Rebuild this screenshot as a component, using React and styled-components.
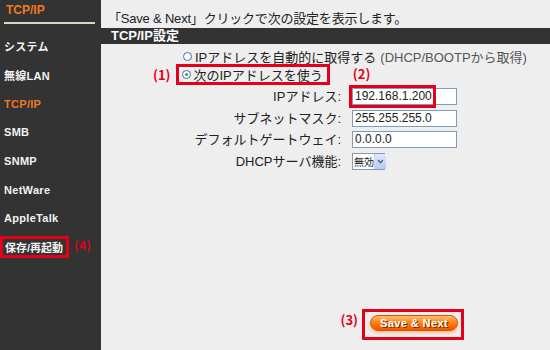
import { Fragment } from "react";
import styled, { createGlobalStyle } from "styled-components";

const GlobalStyle = createGlobalStyle`
  html, body {
    margin: 0;
    padding: 0;
    background: #eeeeee;
  }
  body {
    font-family: "Liberation Sans", "Noto Sans CJK JP", sans-serif;
  }
`;

const RED = "#e3001b";

const Page = styled.div`
  width: 550px;
  height: 350px;
  display: flex;
  overflow: hidden;
`;

const Sidebar = styled.div`
  width: 101px;
  flex-shrink: 0;
  background: #333333;
  display: flex;
  flex-direction: column;
`;

const SideHeader = styled.div`
  height: 22px;
  line-height: 20px;
  padding-left: 6px;
  color: #f07a22;
  font-size: 12px;
  font-weight: bold;
`;

const Divider = styled.div`
  height: 2px;
  margin: 0 6px 0 4px;
  background: #ddd8c4;
`;

const MenuList = styled.ul`
  list-style: none;
  margin: 0;
  padding: 8px 0 0 4px;
`;

const MenuItem = styled.li`
  height: 28.7px;
  display: flex;
  align-items: center;
  white-space: nowrap;
  color: ${(p) => (p.$active ? "#f07a22" : "#f2f2f2")};
  font-size: 11px;
  font-weight: bold;
  letter-spacing: 0.3px;
`;

const MarkBox = styled.span`
  display: inline-flex;
  align-items: center;
  border: 3px solid ${RED};
  box-sizing: border-box;
  white-space: nowrap;
`;

const SideMark = styled(MarkBox)`
  height: 22px;
  margin-left: -4px;
  padding: 0 3px 0 2px;
  letter-spacing: 0;
`;

const Note = styled.span`
  color: ${RED};
  font-size: 13px;
  font-weight: bold;
  font-family: "Noto Sans CJK JP", sans-serif;
  line-height: 16px;
`;

const SideNote = styled(Note)`
  margin-left: 5px;
  margin-top: -4px;
  font-size: 12px;
`;

const Main = styled.div`
  flex: 1;
  display: flex;
  flex-direction: column;
  color: #222;
  font-size: 13px;
`;

const Instruction = styled.div`
  height: 28px;
  box-sizing: border-box;
  padding: 11px 0 0 7px;
  line-height: 16px;
  white-space: nowrap;
  letter-spacing: -0.2px;
`;

const SectionBar = styled.div`
  height: 16px;
  line-height: 16px;
  padding-left: 10px;
  background: #333333;
  color: #fff;
  font-weight: bold;
  font-size: 13px;
`;

const RadioBlock = styled.div`
  padding-top: 4px;
  display: flex;
  flex-direction: column;
`;

const RadioRow = styled.div`
  height: 16px;
  display: flex;
  align-items: center;
  padding-left: ${(p) => p.$indent}px;
  white-space: nowrap;
`;

const MarkRow = styled.div`
  height: 21px;
  display: flex;
  align-items: center;
  padding-left: 52px;
  white-space: nowrap;
`;

const RadioMark = styled(MarkBox)`
  height: 21px;
  padding: 0 4px 0 3px;
  margin-left: 5px;
`;

const Radio = styled.span`
  width: 9px;
  height: 9px;
  border-radius: 50%;
  border: 1px solid #3c6fae;
  background: #fff;
  box-sizing: border-box;
  margin-right: 3px;
  display: inline-flex;
  align-items: center;
  justify-content: center;
  &::after {
    content: "";
    width: 3px;
    height: 3px;
    border-radius: 50%;
    background: ${(p) => (p.$checked ? "#21b53a" : "transparent")};
  }
`;

const Hint = styled.span`
  color: #555;
  font-size: 13px;
  margin-left: 4px;
`;

const FormGrid = styled.div`
  margin-top: 3px;
  display: grid;
  grid-template-columns: 240px auto;
  column-gap: 11px;
  row-gap: 4.5px;
  align-items: center;
`;

const Label = styled.span`
  text-align: right;
  line-height: 17px;
  white-space: nowrap;
`;

const Field = styled.div`
  position: relative;
  width: 105px;
  height: 17px;
  box-sizing: border-box;
  border: 1px solid #7f9db9;
  background: #fff;
  font-size: 12px;
  line-height: 15px;
  padding-left: 2px;
  color: #222;
`;

const FieldMark = styled.span`
  position: absolute;
  left: -4px;
  top: -4px;
  width: 87px;
  height: 23px;
  border: 3px solid ${RED};
  box-sizing: border-box;
`;

const Select = styled.div`
  width: 33px;
  height: 17px;
  box-sizing: border-box;
  border: 1px solid #7f9db9;
  background: #fff;
  display: flex;
  align-items: center;
  white-space: nowrap;
  font-size: 10px;
  font-family: "Noto Sans CJK JP", sans-serif;
  padding-left: 1px;
`;

const SelectArrow = styled.span`
  margin-left: auto;
  flex-shrink: 0;
  width: 11px;
  height: 15px;
  background: linear-gradient(#dfe8fd, #b9cbf6);
  border-left: 1px solid #c3d3fd;
  display: flex;
  align-items: center;
  justify-content: center;
`;

const Footer = styled.div`
  margin-top: auto;
  padding: 0 86px 10px 0;
  display: flex;
  justify-content: flex-end;
  align-items: flex-start;
`;

const FooterNote = styled(Note)`
  margin-top: 3px;
  margin-right: 4px;
`;

const ButtonMark = styled(MarkBox)`
  width: 102px;
  height: 31px;
  padding: 3px 3px 6px 5px;
  align-items: flex-start;
`;

const SaveButton = styled.button`
  width: 88px;
  height: 16px;
  padding: 0;
  border: 1px solid #d4520a;
  border-radius: 9px;
  background: linear-gradient(#ffc27a 0%, #ff8a1e 40%, #ff6a00 70%, #f35a00 100%);
  box-shadow: 0 2px 3px rgba(255, 130, 40, 0.45);
  color: #fff;
  font-family: "Liberation Sans", sans-serif;
  font-size: 11px;
  font-weight: bold;
  line-height: 14px;
  letter-spacing: 0.4px;
  text-shadow: 1px 1px 0 #6e3200;
  cursor: pointer;
`;

const menu = ["システム", "無線LAN", "TCP/IP", "SMB", "SNMP", "NetWare", "AppleTalk"];

const fields = [
  { label: "IPアドレス:", value: "192.168.1.200", marked: true },
  { label: "サブネットマスク:", value: "255.255.255.0" },
  { label: "デフォルトゲートウェイ:", value: "0.0.0.0" },
];

export default function App() {
  return (
    <Page>
      <GlobalStyle />
      <Sidebar>
        <SideHeader>TCP/IP</SideHeader>
        <Divider />
        <MenuList>
          {menu.map((m) => (
            <MenuItem key={m} $active={m === "TCP/IP"}>
              {m}
            </MenuItem>
          ))}
          <MenuItem>
            <SideMark>保存/再起動</SideMark>
            <SideNote>(4)</SideNote>
          </MenuItem>
        </MenuList>
      </Sidebar>

      <Main>
        <Instruction>「Save &amp; Next」クリックで次の設定を表示します。</Instruction>
        <SectionBar>TCP/IP設定</SectionBar>

        <RadioBlock>
          <RadioRow $indent={82}>
            <Radio />
            IPアドレスを自動的に取得する
            <Hint>(DHCP/BOOTPから取得)</Hint>
          </RadioRow>
          <MarkRow>
            <Note>(1)</Note>
            <RadioMark>
              <Radio $checked />
              次のIPアドレスを使う
            </RadioMark>
            <Note style={{ marginLeft: 23, marginTop: -2 }}>(2)</Note>
          </MarkRow>
        </RadioBlock>

        <FormGrid>
          {fields.map((f) => (
            <Fragment key={f.label}>
              <Label>{f.label}</Label>
              <Field>
                {f.value}
                {f.marked && <FieldMark />}
              </Field>
            </Fragment>
          ))}
          <Label>DHCPサーバ機能:</Label>
          <Select>
            無効
            <SelectArrow>
              <svg width="7" height="5" viewBox="0 0 7 5">
                <path d="M1 1 L3.5 3.8 L6 1" fill="none" stroke="#4d6185" strokeWidth="1.4" />
              </svg>
            </SelectArrow>
          </Select>
        </FormGrid>

        <Footer>
          <FooterNote>(3)</FooterNote>
          <ButtonMark>
            <SaveButton>Save &amp; Next</SaveButton>
          </ButtonMark>
        </Footer>
      </Main>
    </Page>
  );
}
